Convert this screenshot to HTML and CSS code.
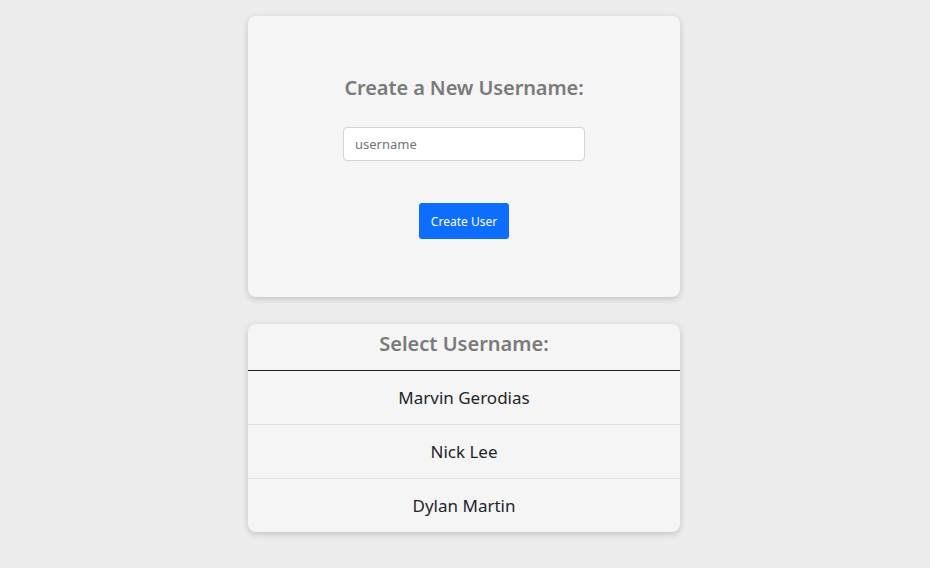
FILE: index.html
```html
<!DOCTYPE html>
<html>
<head>
<meta charset="utf-8">
<link rel="stylesheet" href="styles.css">
</head>
<body>
<main class="page">
  <section class="card create-card">
    <h2 class="create-title">Create a New Username:</h2>
    <input class="username-input" type="text" placeholder="username">
    <button class="create-btn">Create User</button>
  </section>
  <section class="card select-card">
    <h2 class="select-title">Select Username:</h2>
    <ul class="user-list">
      <li class="user-item">Marvin Gerodias</li>
      <li class="user-item">Nick Lee</li>
      <li class="user-item">Dylan Martin</li>
    </ul>
  </section>
</main>
</body>
</html>
```

FILE: styles.css
```css
* { box-sizing: border-box; }
html, body { margin: 0; padding: 0; }
body {
  background: #ececec;
  font-family: "Noto Sans", "Open Sans", sans-serif;
  width: 930px;
  height: 568px;
  overflow: hidden;
}
.page {
  width: 928px;
  display: flex;
  flex-direction: column;
  align-items: center;
  padding-top: 16px;
  gap: 27px;
}
.card {
  width: 432px;
  background: #f5f5f5;
  border-radius: 8px;
  box-shadow: 0 2px 6px rgba(0,0,0,0.18);
}
.create-card {
  height: 281px;
  display: flex;
  flex-direction: column;
  align-items: center;
  padding-top: 59px;
}
.create-title {
  margin: 0;
  font-size: 20px;
  line-height: 25px;
  font-weight: 600;
  color: #7a7a7a;
  letter-spacing: -0.1px;
}
.username-input {
  margin-top: 27px;
  width: 242px;
  height: 34px;
  border: 1px solid #ced4da;
  border-radius: 4px;
  background: #fff;
  padding: 0 11px;
  font-family: inherit;
  font-size: 13px;
  color: #212529;
  outline: none;
}
.username-input::placeholder { color: #6c757d; }
.create-btn {
  margin-top: 42px;
  width: 90px;
  height: 36px;
  border: none;
  border-radius: 3px;
  background: #0d6efd;
  color: #fff;
  font-family: inherit;
  font-size: 12px;
  padding: 0;
}
.select-card { overflow: hidden; }
.select-title {
  margin: 0;
  height: 47px;
  border-bottom: 1px solid #222;
  text-align: center;
  font-size: 20px;
  line-height: 40px;
  font-weight: 600;
  color: #7a7a7a;
}
.user-list {
  list-style: none;
  margin: 0;
  padding: 0;
}
.user-item {
  height: 54px;
  display: flex;
  align-items: center;
  justify-content: center;
  font-size: 17px;
  color: #212529;
  border-top: 1px solid #dedede;
}
.user-item:first-child { border-top: none; height: 53px; }
```
